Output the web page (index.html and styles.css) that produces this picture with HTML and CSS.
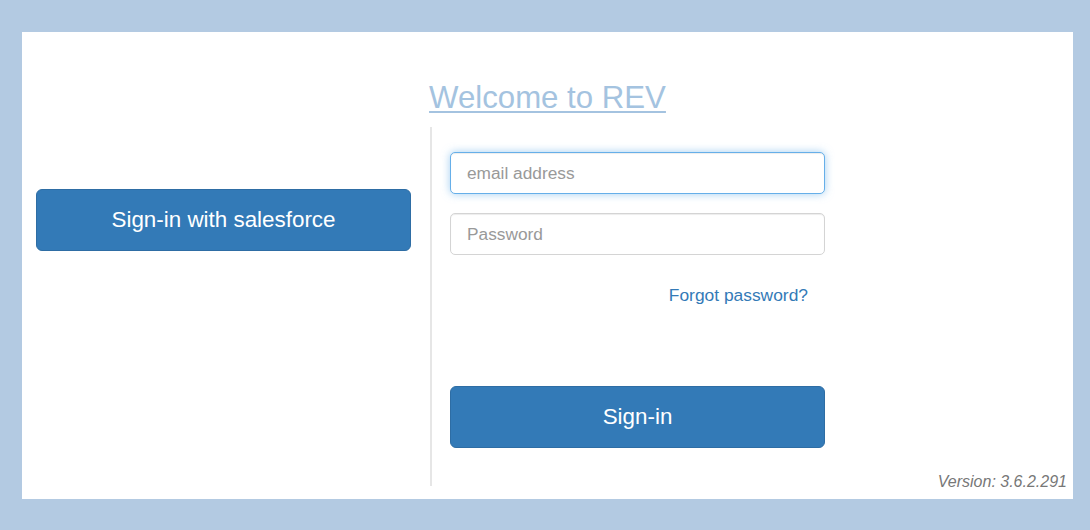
FILE: index.html
```html
<!DOCTYPE html>
<html lang="en">
<head>
<meta charset="utf-8">
<title>Welcome to REV</title>
<link rel="stylesheet" href="styles.css">
</head>
<body>
<div class="panel">
  <div class="title-wrap"><a class="title" href="#">Welcome to REV</a></div>
  <div class="row">
    <div class="col-left">
      <button class="btn btn-sf" type="button">Sign-in with salesforce</button>
    </div>
    <div class="col-right">
      <form class="login-form">
        <input class="field is-focused" type="email" placeholder="email address">
        <input class="field" type="password" placeholder="Password">
        <div class="forgot"><a href="#">Forgot password?</a></div>
        <button class="btn btn-signin" type="button">Sign-in</button>
      </form>
      <div class="version">Version: 3.6.2.291</div>
    </div>
  </div>
</div>
</body>
</html>
```
FILE: styles.css
```css
* { box-sizing: border-box; }
html, body { margin: 0; }
body {
  background: #b3cae2;
  padding: 32px 17px 31px 22px;
  height: 530px;
  font-family: "Liberation Sans", Arial, sans-serif;
}
.panel {
  background: #fff;
  height: 467px;
  padding-top: 48px;
}
.title-wrap {
  text-align: center;
  line-height: 36px;
  height: 36px;
  margin-bottom: 11px;
}
.title {
  font-size: 31.2px;
  color: #a4c3e0;
  text-decoration: underline;
  text-decoration-thickness: 2px;
  text-underline-offset: 3px;
}
.row {
  display: flex;
  height: 359px;
}
.col-left {
  width: 408px;
  padding: 62px 19px 0 14px;
}
.btn {
  display: block;
  width: 375px;
  height: 62px;
  border: 1px solid #2e6da4;
  border-radius: 6px;
  background: #337ab7;
  color: #fff;
  font-family: "Liberation Sans", Arial, sans-serif;
  font-size: 22.4px;
  padding: 0;
  cursor: pointer;
}
.col-right {
  flex: 1;
  border-left: 2px solid #e6e6e6;
  padding-left: 18px;
  padding-top: 25px;
  display: flex;
  flex-direction: column;
}
.login-form {
  width: 375px;
  display: flex;
  flex-direction: column;
}
.field {
  height: 42px;
  width: 375px;
  border: 1px solid #d4d4d4;
  border-radius: 5px;
  padding: 0 16px;
  font-family: "Liberation Sans", Arial, sans-serif;
  font-size: 17.3px;
  color: #555;
  box-shadow: inset 0 1px 1px rgba(0,0,0,.075);
  outline: none;
}
.field + .field { margin-top: 19px; }
.field::placeholder { color: #999; }
.field.is-focused {
  border-color: #66afe9;
  box-shadow: inset 0 1px 1px rgba(0,0,0,.075), 0 0 8px rgba(102,175,233,.6);
}
.forgot {
  margin-top: 30px;
  line-height: 20px;
  text-align: right;
  padding-right: 17px;
}
.forgot a {
  font-size: 17.4px;
  color: #337ab7;
  text-decoration: none;
}
.btn-signin { margin-top: 80px; }
.version {
  margin-top: auto;
  margin-bottom: -3px;
  text-align: right;
  padding-right: 6px;
  font-size: 16px;
  line-height: 14px;
  font-style: italic;
  color: #777;
}
```
